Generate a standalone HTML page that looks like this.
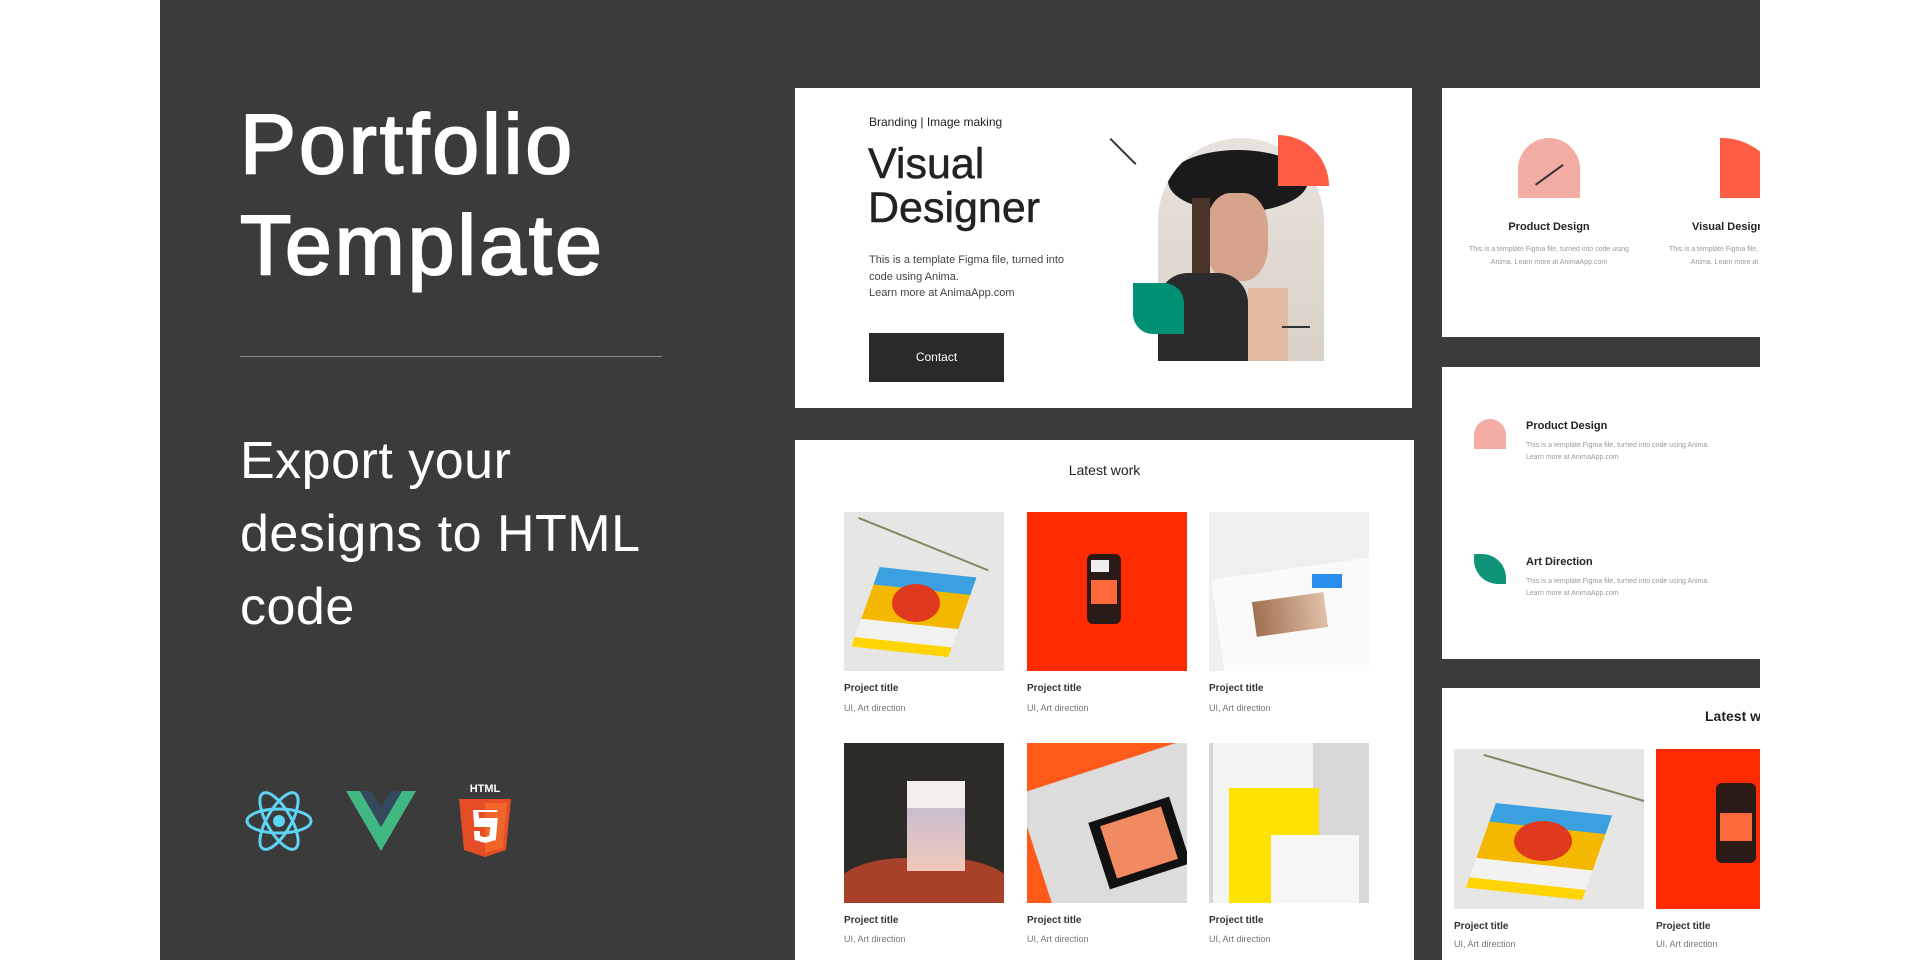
<!DOCTYPE html>
<html><head><meta charset="utf-8"><style>
*{margin:0;padding:0;box-sizing:border-box}
body{width:1920px;height:960px;background:#fff;position:relative;overflow:hidden;font-family:"Liberation Sans",sans-serif}
.a{position:absolute}
.dark{left:160px;top:0;width:1600px;height:960px;background:#3b3b3b;overflow:hidden}
.card{position:absolute;background:#fff;overflow:hidden}
.h1{color:#fff;font-size:84px;line-height:101px;font-weight:400;letter-spacing:3px;-webkit-text-stroke:2px #fff}
.h2{color:#fff;font-size:52px;line-height:73px;letter-spacing:0.5px}
.pt{font-size:10px;font-weight:700;color:#333}
.ps{font-size:9px;color:#777}
.ds{font-size:7px;color:#999;line-height:13px;text-align:center}
</style></head><body>
<div class="a dark">
  <div class="a h1" style="left:80px;top:94px">Portfolio<br>Template</div>
  <div class="a" style="left:80px;top:356px;width:422px;height:1px;background:#8a8a8a"></div>
  <div class="a h2" style="left:80px;top:425px">Export your<br>designs to HTML<br>code</div>
  <svg class="a" style="left:84px;top:790px" width="70" height="62" viewBox="-35 -31 70 62"><g fill="none" stroke="#5fd3f3" stroke-width="3"><ellipse rx="32" ry="12"/><ellipse rx="32" ry="12" transform="rotate(60)"/><ellipse rx="32" ry="12" transform="rotate(120)"/></g><circle r="6" fill="#5fd3f3"/></svg>
  <svg class="a" style="left:186px;top:791px" width="70" height="60" viewBox="0 0 70 60"><path d="M0 0h14l21 36 21-36h14L35 60z" fill="#41b883"/><path d="M14 0h11l10 17 10-17h11L35 36z" fill="#34495e"/></svg>
  <div class="a" style="left:298px;top:783px;width:54px;font-size:11px;font-weight:700;color:#fff;text-align:center">HTML</div>
  <svg class="a" style="left:299px;top:799px" width="52" height="58" viewBox="0 0 52 58"><path d="M0 0h52l-5 51-21 7-21-7z" fill="#e44d26"/><path d="M26 4h22l-4 45-18 5z" fill="#f16529"/><path d="M38 11H14l1.2 17h16l-1 9-4 1.2-5-1.2-.4-5h-6l.8 9 10.6 3 10.6-3 2-22H20l-.6-6h19z" fill="#fff"/></svg>

  <div class="card" style="left:635px;top:88px;width:617px;height:320px">
    <div class="a" style="left:74px;top:27px;font-size:12px;color:#222">Branding | Image making</div>
    <div class="a" style="left:73px;top:54px;font-size:43px;line-height:44px;color:#222;-webkit-text-stroke:0.5px #222">Visual<br>Designer</div>
    <div class="a" style="left:74px;top:164px;font-size:11px;line-height:16.5px;color:#444">This is a template Figma file, turned into<br>code using Anima.<br>Learn more at AnimaApp.com</div>
    <div class="a" style="left:74px;top:245px;width:135px;height:49px;background:#2a2a2a;color:#fff;font-size:12px;text-align:center;line-height:49px">Contact</div>
    <div class="a" style="left:363px;top:50px;width:166px;height:223px;border-radius:83px 83px 0 0;overflow:hidden;background:linear-gradient(#e8e3dd,#d9d1c7)">
      <div class="a" style="left:10px;top:12px;width:140px;height:62px;border-radius:50%;background:#1a1a1a"></div>
      <div class="a" style="left:48px;top:55px;width:62px;height:88px;border-radius:40%;background:#d6a48c"></div>
      <div class="a" style="left:34px;top:60px;width:18px;height:90px;background:#4a3328"></div>
      <div class="a" style="left:0;top:135px;width:90px;height:100px;border-radius:30px 30px 0 0;background:#2b2a2c"></div>
      <div class="a" style="left:90px;top:150px;width:40px;height:80px;background:#e1b8a0"></div>
    </div>
    <div class="a" style="left:483px;top:47px;width:51px;height:51px;background:#ff5c45;border-radius:0 51px 0 0"></div>
    <div class="a" style="left:338px;top:195px;width:51px;height:51px;background:#009075;border-radius:0 20px 0 20px"></div>
    <div class="a" style="left:316px;top:50px;width:36px;height:1.5px;background:#333;transform:rotate(45deg);transform-origin:0 0"></div>
    <div class="a" style="left:487px;top:238px;width:28px;height:1.5px;background:#333"></div>
  </div>

  <div class="card" style="left:635px;top:440px;width:619px;height:520px">
    <div class="a" style="left:0;top:22px;width:619px;text-align:center;font-size:14px;color:#222">Latest work</div>
    <div class="a" style="left:49px;top:72px;width:160px;height:159px;background:#e6e6e4;overflow:hidden">
      <div class="a" style="left:20px;top:60px;width:100px;height:80px;background:linear-gradient(#3aa0e0 0 22%,#f5b800 22% 65%,#f2f2f2 65% 88%,#ffd400 88%);transform:skewX(-14deg) rotate(6deg)"></div>
      <div class="a" style="left:48px;top:72px;width:48px;height:38px;border-radius:50%;background:#e03a1e"></div>
      <div class="a" style="left:15px;top:5px;width:140px;height:2px;background:#7a8a60;transform:rotate(22deg);transform-origin:0 0"></div>
    </div>
    <div class="a" style="left:232px;top:72px;width:160px;height:159px;background:#ff2a00">
      <div class="a" style="left:60px;top:42px;width:34px;height:70px;border-radius:6px;background:#2a1a18"></div>
      <div class="a" style="left:64px;top:68px;width:26px;height:24px;background:#ff6a3a"></div>
      <div class="a" style="left:64px;top:48px;width:18px;height:12px;background:#eee"></div>
    </div>
    <div class="a" style="left:414px;top:72px;width:160px;height:159px;background:#efeff1;overflow:hidden">
      <div class="a" style="left:10px;top:56px;width:160px;height:120px;background:#fafafa;transform:rotate(-8deg)"></div>
      <div class="a" style="left:103px;top:62px;width:30px;height:14px;background:#2a8ef0"></div>
      <div class="a" style="left:45px;top:85px;width:72px;height:35px;background:linear-gradient(90deg,#a07050,#e0c0a8);transform:rotate(-8deg)"></div>
    </div>
    <div class="a pt" style="left:49px;top:243px">Project title</div><div class="a ps" style="left:49px;top:263px">UI, Art direction</div>
    <div class="a pt" style="left:232px;top:243px">Project title</div><div class="a ps" style="left:232px;top:263px">UI, Art direction</div>
    <div class="a pt" style="left:414px;top:243px">Project title</div><div class="a ps" style="left:414px;top:263px">UI, Art direction</div>
    <div class="a" style="left:49px;top:303px;width:160px;height:160px;background:#2c2b28;overflow:hidden">
      <div class="a" style="left:-10px;top:115px;width:180px;height:80px;border-radius:40% 40% 0 0;background:#a8412a"></div>
      <div class="a" style="left:63px;top:38px;width:58px;height:90px;background:linear-gradient(#f3f0ec 0 30%,#c8bed0 30%,#f0c9b8)"></div>
    </div>
    <div class="a" style="left:232px;top:303px;width:160px;height:160px;background:#ff5a1a;overflow:hidden">
      <div class="a" style="left:10px;top:20px;width:180px;height:160px;background:#dcdcdc;transform:rotate(-18deg)"></div>
      <div class="a" style="left:70px;top:65px;width:85px;height:70px;background:#111;transform:rotate(-18deg)"></div>
      <div class="a" style="left:80px;top:72px;width:64px;height:55px;background:#f08a60;transform:rotate(-18deg)"></div>
    </div>
    <div class="a" style="left:414px;top:303px;width:160px;height:160px;background:#d8d6d8;overflow:hidden">
      <div class="a" style="left:4px;top:0;width:100px;height:160px;background:#f4f4f2"></div>
      <div class="a" style="left:20px;top:45px;width:90px;height:115px;background:#ffe300"></div>
      <div class="a" style="left:62px;top:92px;width:88px;height:68px;background:#f6f6f6"></div>
    </div>
    <div class="a pt" style="left:49px;top:475px">Project title</div><div class="a ps" style="left:49px;top:494px">UI, Art direction</div>
    <div class="a pt" style="left:232px;top:475px">Project title</div><div class="a ps" style="left:232px;top:494px">UI, Art direction</div>
    <div class="a pt" style="left:414px;top:475px">Project title</div><div class="a ps" style="left:414px;top:494px">UI, Art direction</div>
  </div>

  <div class="card" style="left:1282px;top:88px;width:318px;height:249px">
    <div class="a" style="left:76px;top:50px;width:62px;height:60px;background:#f3aca3;border-radius:31px 31px 0 0"></div>
    <div class="a" style="left:93px;top:96px;width:34px;height:1.5px;background:#333;transform:rotate(-36deg);transform-origin:0 0"></div>
    <div class="a" style="left:0;top:133px;width:214px;text-align:center;font-size:11px;font-weight:700;color:#222">Product Design</div>
    <div class="a ds" style="left:20px;top:155px;width:174px">This is a template Figma file, turned into code using Anima. Learn more at AnimaApp.com</div>
    <div class="a" style="left:278px;top:50px;width:62px;height:60px;background:#ff5c45;border-radius:0 60px 0 0"></div>
    <div class="a" style="left:250px;top:133px;font-size:11px;font-weight:700;color:#222;white-space:nowrap">Visual Designer</div>
    <div class="a ds" style="left:220px;top:155px;width:174px">This is a template Figma file, turned into code using Anima. Learn more at AnimaApp.com</div>
  </div>

  <div class="card" style="left:1282px;top:367px;width:318px;height:292px">
    <div class="a" style="left:32px;top:52px;width:32px;height:30px;background:#f3aca3;border-radius:16px 16px 0 0"></div>
    <div class="a" style="left:84px;top:53px;font-size:11px;font-weight:700;color:#222">Product Design</div>
    <div class="a ds" style="left:84px;top:73px;text-align:left;width:200px;line-height:12px">This is a template Figma file, turned into code using Anima. Learn more at AnimaApp.com</div>
    <div class="a" style="left:32px;top:187px;width:32px;height:30px;background:#0f9478;border-radius:0 24px 0 24px"></div>
    <div class="a" style="left:84px;top:189px;font-size:11px;font-weight:700;color:#222">Art Direction</div>
    <div class="a ds" style="left:84px;top:209px;text-align:left;width:200px;line-height:12px">This is a template Figma file, turned into code using Anima. Learn more at AnimaApp.com</div>
  </div>

  <div class="card" style="left:1282px;top:688px;width:318px;height:272px">
    <div class="a" style="left:263px;top:20px;font-size:14px;font-weight:700;color:#222;white-space:nowrap">Latest work</div>
    <div class="a" style="left:12px;top:61px;width:190px;height:160px;background:#e6e6e4;overflow:hidden">
      <div class="a" style="left:25px;top:60px;width:120px;height:85px;background:linear-gradient(#3aa0e0 0 22%,#f5b800 22% 65%,#f2f2f2 65% 88%,#ffd400 88%);transform:skewX(-14deg) rotate(6deg)"></div>
      <div class="a" style="left:60px;top:72px;width:58px;height:40px;border-radius:50%;background:#e03a1e"></div>
      <div class="a" style="left:30px;top:5px;width:170px;height:2px;background:#7a8a60;transform:rotate(16deg);transform-origin:0 0"></div>
    </div>
    <div class="a" style="left:214px;top:61px;width:120px;height:160px;background:#ff2a00">
      <div class="a" style="left:60px;top:34px;width:40px;height:80px;border-radius:6px;background:#2a1a18"></div>
      <div class="a" style="left:64px;top:64px;width:32px;height:28px;background:#ff6a3a"></div>
    </div>
    <div class="a pt" style="left:12px;top:233px">Project title</div><div class="a ps" style="left:12px;top:251px">UI, Art direction</div>
    <div class="a pt" style="left:214px;top:233px">Project title</div><div class="a ps" style="left:214px;top:251px">UI, Art direction</div>
  </div>
</div>
</body></html>
